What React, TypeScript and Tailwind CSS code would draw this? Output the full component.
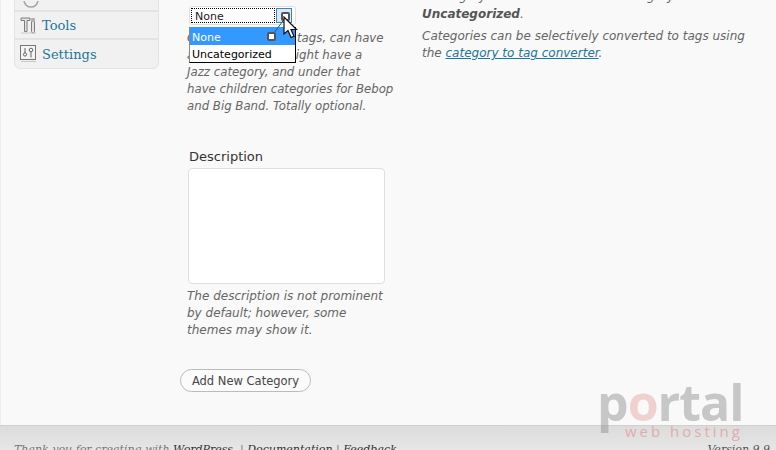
const sans = "font-['DejaVu_Sans',sans-serif]";

const ToolsIcon = () => (
  <svg width="18" height="18" viewBox="0 0 18 18" fill="none" className="shrink-0">
    <path d="M1 2h9v2.500H7v11H4.500v-11H1z" fill="#e4e4e4" stroke="#7d7d7d" />
    <path d="M12 2v4h-.5v9.500a1.500 1.500 0 0 0 3 0V6H14V2" fill="#e4e4e4" stroke="#7d7d7d" />
    <path d="M1 17h15" stroke="#c8c8c8" />
  </svg>
);

const SettingsIcon = () => (
  <svg width="17" height="18" viewBox="0 0 17 18" fill="none" className="shrink-0">
    <rect x="0.5" y="0.5" width="15" height="14" fill="#f4f4f4" stroke="#777" />
    <circle cx="5" cy="9.500" r="1.600" stroke="#666" />
    <path d="M5 3v5" stroke="#666" />
    <circle cx="11" cy="5" r="1.800" stroke="#666" />
    <path d="M11 7v5.500" stroke="#666" />
    <path d="M1 16.500h15" stroke="#c8c8c8" />
  </svg>
);

const Cursor = () => (
  <svg width="16" height="24" viewBox="0 0 16 24" className="absolute left-[283px] top-[16px]">
    <path d="M1 1v17l4-3.500 3 7 3-1.200-3-6.800h5.500z" fill="#fff" stroke="#111" strokeWidth="1.200" />
  </svg>
);

function Sidebar() {
  return (
    <div className="w-[145px] ml-[14px] shrink-0 self-start mt-[-17px] bg-[#f1f1f1] border border-[#e3e3e3] rounded-b-[6px] font-['DejaVu_Serif',serif] text-[13px] text-[#21759b]">
      <div className="h-[28px] border-b-2 border-[#e3e3e3] flex items-end pl-[8px]">
        <svg width="16" height="8" viewBox="0 0 16 8" className="mb-[1px]" fill="none">
          <path d="M1 0c1 4 4 6 7 6s6-2 7-6" stroke="#a5a5a5" strokeWidth="1.500" />
        </svg>
      </div>
      <div className="h-[28px] border-b-2 border-[#e3e3e3] flex items-center gap-[4px] pl-[5px]">
        <ToolsIcon />
        <span className="mt-[2px]">Tools</span>
      </div>
      <div className="h-[28px] flex items-center gap-[5px] pl-[5px]">
        <SettingsIcon />
        <span className="mt-[2px]">Settings</span>
      </div>
    </div>
  );
}

function FormColumn() {
  return (
    <div className={`w-[208px] ml-[28px] shrink-0 pt-[30px] text-[12px] leading-[17px] italic text-[#666] ${sans}`}>
      <p className="whitespace-nowrap text-[11.75px]">
        Categories, unlike tags, can have
        <br />a hierarchy. You might have a
        <br />Jazz category, and under that
        <br />have children categories for Bebop
        <br />and Big Band. Totally optional.
      </p>
      <div className="mt-[33px] ml-[2px] not-italic text-[13px] leading-[17px] text-[#333]">Description</div>
      <div className="mt-[3px] ml-[1px] w-[197px] h-[116px] bg-white border border-[#dfdfdf] rounded-[4px]" />
      <p className="mt-[4px] w-[200px]">The description is not prominent by default; however, some themes may show it.</p>
      <button className="mt-[30px] ml-[-7px] w-[131px] h-[23px] pt-[1px] rounded-full bg-[#fbfbfb] border border-[#bbb] not-italic text-[11.5px] text-[#464646] flex items-center justify-center">
        Add New Category
      </button>
    </div>
  );
}

function RightColumn() {
  return (
    <div className={`w-[330px] ml-[26px] pl-[1px] shrink-0 mt-[-12px] text-[12px] leading-[17px] italic text-[#666] ${sans}`}>
      <p className="whitespace-nowrap">a category are set to the default category</p>
      <p className="mt-[1px]">
        <strong className="text-[#555]">Uncategorized</strong>.
      </p>
      <p className="mt-[5px]">
        Categories can be selectively converted to tags using the <a className="text-[#21759b] underline">category to tag converter</a>.
      </p>
    </div>
  );
}

// open select with the pointer callout over it
function SelectOverlay() {
  return (
    <>
      <div className={`absolute left-[189px] top-[6px] w-[107px] h-[19px] bg-white border border-[#dfdfdf] rounded-[3px] flex items-center p-[1px] text-[11px] text-[#222] ${sans}`}>
        <div className="w-[84px] h-[15px] border border-dotted border-black leading-[15px] pl-[3px]">None</div>
        <div className="w-[16px] h-[15px] ml-[1px] border border-[#3a86b8] bg-[#dbe8f3]" />
      </div>
      <div className={`absolute left-[189px] top-[27px] w-[107px] h-[36px] bg-white border border-black border-t-0 border-l-[#888] text-[11px] leading-[17px] text-black ${sans}`}>
        <div className="bg-[#3399ff] text-white pl-[2px] pt-[2px] h-[18px]">None</div>
        <div className="pl-[2px] pt-[1px]">Uncategorized</div>
      </div>
      <svg width="20" height="24" viewBox="0 0 20 24" className="absolute left-[270px] top-[14px]" fill="none">
        <path d="M2 22 15 4" stroke="#33556b" />
      </svg>
      <div className="absolute left-[267px] top-[32px] w-[9px] h-[9px] bg-white border-2 border-[#555] rounded-[2px]" />
      <div className="absolute left-[281px] top-[12px] w-[9px] h-[9px] bg-white border-2 border-[#555] rounded-[2px]" />
      <Cursor />
    </>
  );
}

function Watermark() {
  return (
    <div className="absolute left-[597px] top-[377px] w-[150px] pointer-events-none">
      <div className="font-['Open_Sans',sans-serif] font-bold text-[50px] leading-[50px] tracking-[-1px] text-[#8c8c8c] opacity-45">
        p<span className="text-[#e9a0a0]">o</span>rtal
      </div>
      <div className="font-['Open_Sans',sans-serif] text-[15px] leading-[18px] mt-[-5px] ml-[28px] tracking-[3px] whitespace-nowrap text-[#e58a8a] opacity-60">
        web hosting
      </div>
    </div>
  );
}

function Footer() {
  return (
    <div className="h-[25px] border-t border-[#d0d0d0] bg-gradient-to-b from-[#dcdcdc] to-[#e6e6e6] flex justify-between pl-[14px] pr-[6px] pt-[16px] font-['DejaVu_Serif',serif] text-[11px] italic text-[#777] whitespace-nowrap">
      <span>
        Thank you for creating with <a className="text-[#333]">WordPress</a>. | <a className="text-[#333]">Documentation</a> | <a className="text-[#333]">Feedback</a>
      </span>
      <span className="text-[#555]">Version 9.9</span>
    </div>
  );
}

export default function App() {
  return (
    <div className="relative w-[776px] h-[450px] overflow-hidden bg-[#f9f9f9] shadow-[inset_1px_0_0_#eeeeee]">
      <div className="flex h-[425px] overflow-hidden">
        <Sidebar />
        <FormColumn />
        <RightColumn />
      </div>
      <Footer />
      <SelectOverlay />
      <Watermark />
    </div>
  );
}
